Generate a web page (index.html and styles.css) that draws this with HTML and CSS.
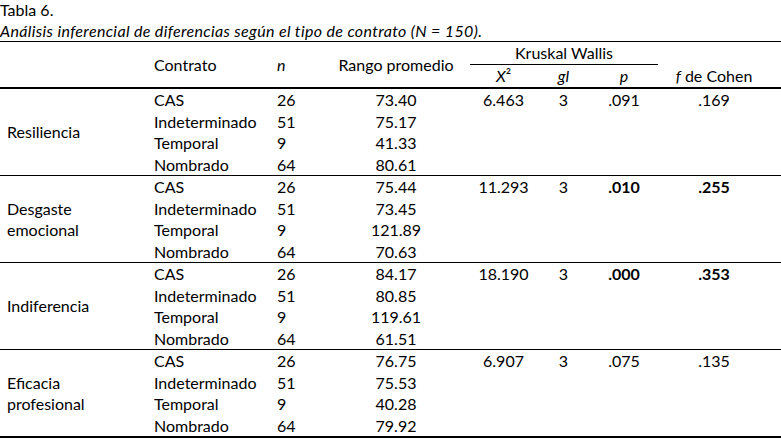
FILE: index.html
```html
<!DOCTYPE html>
<html lang="es">
<head>
<meta charset="utf-8">
<title>Tabla 6</title>
<link rel="stylesheet" href="styles.css">
</head>
<body>
<div class="caption">
  <p class="num">Tabla 6.</p>
  <p class="title">Análisis inferencial de diferencias según el tipo de contrato (N = 150).</p>
</div>
<table class="stats">
  <colgroup>
    <col class="w1"><col class="w2"><col class="w3"><col class="w4"><col class="w5"><col class="w6"><col class="w7"><col class="w8">
  </colgroup>
  <thead>
    <tr class="h1">
      <th rowspan="2" class="left dim"></th>
      <th rowspan="2" class="left">Contrato</th>
      <th rowspan="2" class="left"><i>n</i></th>
      <th rowspan="2">Rango promedio</th>
      <th colspan="3" class="kw"><div class="kw-in">Kruskal Wallis</div></th>
      <th rowspan="2" class="fcol bottom"><i>f</i> de Cohen</th>
    </tr>
    <tr class="h2">
      <th><i>X</i>²</th>
      <th><i>gl</i></th>
      <th><i>p</i></th>
    </tr>
  </thead>
  <tbody class="grp">
    <tr><td rowspan="4" class="left dim">Resiliencia</td><td class="left">CAS</td><td class="left">26</td><td>73.40</td><td>6.463</td><td>3</td><td>.091</td><td class="fcol">.169</td></tr>
    <tr><td class="left">Indeterminado</td><td class="left">51</td><td>75.17</td><td></td><td></td><td></td><td class="fcol"></td></tr>
    <tr><td class="left">Temporal</td><td class="left">9</td><td>41.33</td><td></td><td></td><td></td><td class="fcol"></td></tr>
    <tr><td class="left">Nombrado</td><td class="left">64</td><td>80.61</td><td></td><td></td><td></td><td class="fcol"></td></tr>
  </tbody>
  <tbody class="grp sep">
    <tr><td rowspan="4" class="left dim">Desgaste<br>emocional</td><td class="left">CAS</td><td class="left">26</td><td>75.44</td><td>11.293</td><td>3</td><td><b>.010</b></td><td class="fcol"><b>.255</b></td></tr>
    <tr><td class="left">Indeterminado</td><td class="left">51</td><td>73.45</td><td></td><td></td><td></td><td class="fcol"></td></tr>
    <tr><td class="left">Temporal</td><td class="left">9</td><td>121.89</td><td></td><td></td><td></td><td class="fcol"></td></tr>
    <tr><td class="left">Nombrado</td><td class="left">64</td><td>70.63</td><td></td><td></td><td></td><td class="fcol"></td></tr>
  </tbody>
  <tbody class="grp sep">
    <tr><td rowspan="4" class="left dim">Indiferencia</td><td class="left">CAS</td><td class="left">26</td><td>84.17</td><td>18.190</td><td>3</td><td><b>.000</b></td><td class="fcol"><b>.353</b></td></tr>
    <tr><td class="left">Indeterminado</td><td class="left">51</td><td>80.85</td><td></td><td></td><td></td><td class="fcol"></td></tr>
    <tr><td class="left">Temporal</td><td class="left">9</td><td>119.61</td><td></td><td></td><td></td><td class="fcol"></td></tr>
    <tr><td class="left">Nombrado</td><td class="left">64</td><td>61.51</td><td></td><td></td><td></td><td class="fcol"></td></tr>
  </tbody>
  <tbody class="grp sep last">
    <tr><td rowspan="4" class="left dim">Eficacia<br>profesional</td><td class="left">CAS</td><td class="left">26</td><td>76.75</td><td>6.907</td><td>3</td><td>.075</td><td class="fcol">.135</td></tr>
    <tr><td class="left">Indeterminado</td><td class="left">51</td><td>75.53</td><td></td><td></td><td></td><td class="fcol"></td></tr>
    <tr><td class="left">Temporal</td><td class="left">9</td><td>40.28</td><td></td><td></td><td></td><td class="fcol"></td></tr>
    <tr><td class="left">Nombrado</td><td class="left">64</td><td>79.92</td><td></td><td></td><td></td><td class="fcol"></td></tr>
  </tbody>
</table>
</body>
</html>
```
FILE: styles.css
```css
html, body {
  margin: 0;
  padding: 0;
  background: #fff;
}
body {
  font-family: Lato, "Open Sans", "Liberation Sans", sans-serif;
  font-size: 16px;
  color: #000;
}
.caption p {
  margin: 0;
  white-space: nowrap;
}
.num {
  line-height: 20px;
}
.title {
  font-style: italic;
  line-height: 21px;
  letter-spacing: 0.35px;
}
.stats {
  width: 781px;
  table-layout: fixed;
  border-collapse: separate;
  border-spacing: 0;
}
.w1 { width: 147px; }
.w2 { width: 123px; }
.w3 { width: 60px; }
.w4 { width: 132px; }
.w5 { width: 83px; }
.w6 { width: 37px; }
.w7 { width: 84px; }
.w8 { width: 115px; }
.stats th, .stats td {
  padding: 0;
  font-weight: normal;
  text-align: center;
  vertical-align: middle;
  white-space: nowrap;
  line-height: 21.5px;
}
.stats th { line-height: 22px; }
.stats .left {
  text-align: left;
  padding-left: 7px;
}
.stats .fcol {
  padding-right: 19px;
}
.stats .bottom {
  vertical-align: bottom;
}
.stats b { font-weight: bold; }
.h1 th {
  border-top: 1px solid #000;
}
.h1 th[rowspan], .h2 th {
  border-bottom: 2px solid #000;
}
.stats th.kw {
  padding: 0 8px;
}
.kw-in {
  border-bottom: 1px solid #000;
}
.sep tr:first-child td {
  border-top: 1px solid #000;
}
.last tr:last-child td, .last td.dim {
  border-bottom: 2px solid #000;
}
```
